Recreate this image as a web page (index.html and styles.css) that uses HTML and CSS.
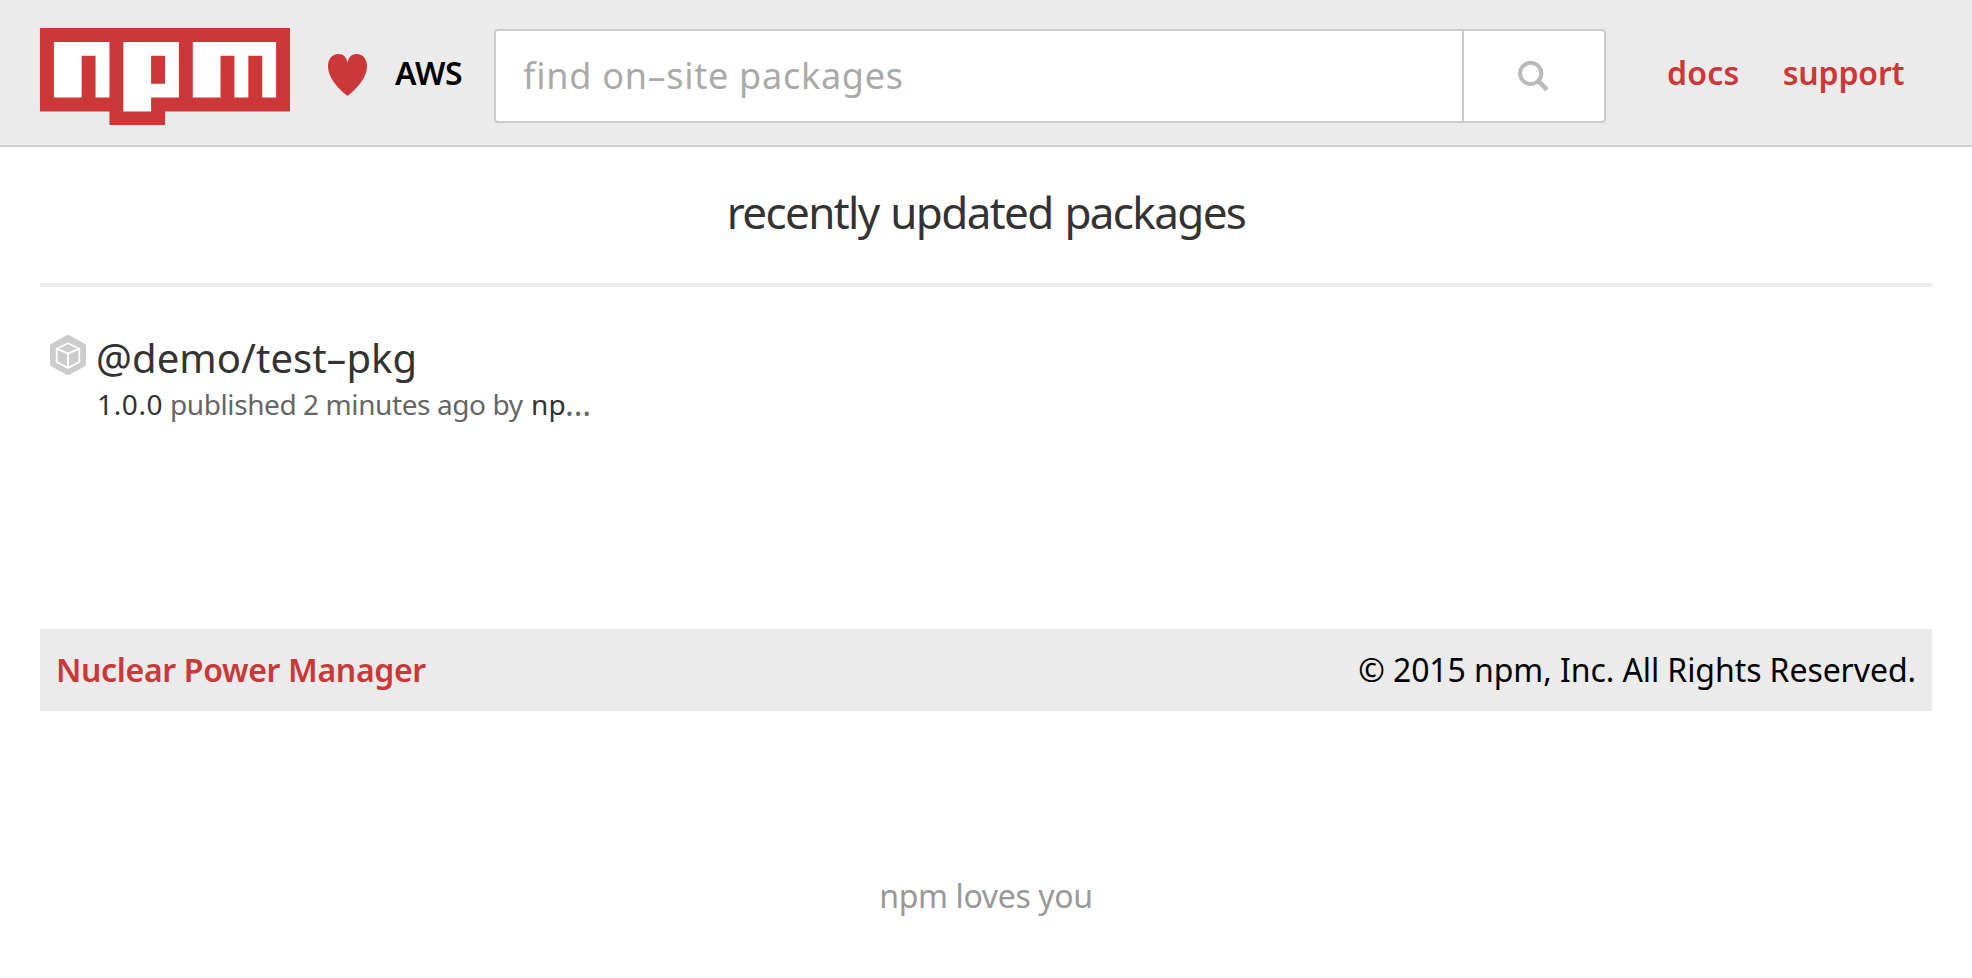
FILE: index.html
```html
<!DOCTYPE html>
<html lang="en">
<head>
<meta charset="utf-8">
<title>npm</title>
<link rel="stylesheet" href="styles.css">
</head>
<body>
<header class="header">
  <a class="logo"><svg viewBox="0 0 18 7" preserveAspectRatio="none"><path fill="#cb3837" d="M0 0h18v6H9v1H5V6H0z"/><path fill="#fff" fill-rule="evenodd" d="M1 5h2V2h1v3h1V1H1zM6 1v5h2V5h2V1zM8 2h1v2H8zM11 1v4h2V2h1v3h1V2h1v3h1V1z"/></svg></a>
  <svg class="heart" viewBox="0 0 39 42"><path fill="#cb3837" d="M19.5 8.6C18.4 3.4 15.5 0 10.4 0 4 0 0 5 0 12.200 0 22 7.500 32.500 19.500 42 31.500 32.500 39 22 39 12.200 39 5 35 0 28.600 0 23.500 0 20.600 3.400 19.500 8.600z"/></svg>
  <span class="aws">AWS</span>
  <div class="search">
    <div class="search-input">find on<span class="dash">-</span>site packages</div>
    <div class="search-button"><svg class="glass" viewBox="0 0 31 31"><circle cx="12.700" cy="12.400" r="10.600" fill="none" stroke="#bbb" stroke-width="4"/><path d="M20 19.700L29 28.900" stroke="#bbb" stroke-width="4.600"/></svg></div>
  </div>
  <nav class="nav"><a class="docs">docs</a><a class="support">support</a></nav>
</header>
<main class="main">
  <h1 class="title">recently updated packages</h1>
  <section class="package">
    <svg class="package-icon" viewBox="0 0 36 40"><path fill="#ccc" stroke="#ccc" stroke-width="6" stroke-linejoin="round" d="M18 3L33 11.200V28.800L18 37 3 28.800V11.200z"/><path fill="none" stroke="#fff" stroke-width="1.800" stroke-linejoin="round" d="M18 8.200L29.300 13.700V27L18 33 6.700 27V13.700zM6.700 13.700L18 18.600 29.300 13.700M18 18.600V33"/></svg>
    <div>
      <h2 class="name">@demo/test<span class="dash">-</span>pkg</h2>
      <p class="meta"><span class="version">1.0.0</span><span class="published">published 2 minutes ago by</span><span class="author">np</span><span class="more">…</span></p>
    </div>
  </section>
</main>
<footer class="footer">
  <a class="tagline">Nuclear Power Manager</a>
  <span class="copyright">© 2015 npm, Inc. All Rights Reserved.</span>
</footer>
<p class="love">npm loves you</p>
</body>
</html>
```

FILE: styles.css
```css
* { box-sizing: border-box; }
body { margin: 0; background: #fff; color: #000; font-family: "Noto Sans", sans-serif; font-size: 32px; }
h1, h2, p { margin: 0; font-weight: 400; }
svg { display: block; flex: none; }
.header { display: flex; align-items: center; height: 147px; padding-left: 40px; background: #ebebeb; border-bottom: 2px solid #d0d0d0; white-space: nowrap; }
.logo { width: 250px; margin-top: 8px; }
.logo svg { width: 250px; height: 97.400px; }
.heart { width: 39px; height: 42px; margin: 5px 0 0 38px; }
.aws { width: 99px; margin-left: 28px; font-weight: 600; letter-spacing: -.3px; }
.search { display: flex; width: 1112px; height: 94px; margin-top: 7px; border: 2px solid #ccc; border-radius: 4px; background: #fff; overflow: hidden; }
.search-input { flex: 1; padding-left: 27px; color: #aaa; font-size: 36px; line-height: 90px; letter-spacing: .75px; }
.search-button { display: flex; align-items: center; width: 142px; padding: 1px 0 0 54px; border-left: 2px solid #ccc; }
.glass { width: 31px; height: 31px; }
.dash { display: inline-block; margin: 0 .085em; transform: scaleX(1.7); }
.nav { display: flex; gap: 43px; margin-left: 61px; color: #cb3837; font-weight: 600; }
.docs { letter-spacing: .25px; }
.support { letter-spacing: -.15px; }
.main { height: 482px; margin: 0 40px; color: #333; }
.title { height: 140px; border-bottom: 4px solid #ebebeb; font-size: 44px; line-height: 131px; letter-spacing: -1.640px; word-spacing: 2px; text-align: center; }
.package { display: flex; gap: 10px; padding: 43px 0 0 10px; }
.package-icon { width: 36px; height: 40px; margin-top: 5px; }
.name { font-size: 40px; line-height: 55px; letter-spacing: .05px; }
.meta { display: flex; padding-left: 1px; color: #666; font-size: 28px; line-height: 38px; white-space: nowrap; }
.version { width: 73px; letter-spacing: .640px; color: #333; }
.published { width: 361px; letter-spacing: -.41px; }
.author { width: 34px; letter-spacing: .2px; color: #333; }
.more { font-size: 33px; }
.footer { display: flex; justify-content: space-between; height: 82px; margin: 0 40px; padding: 0 16px; background: #ebebeb; line-height: 81px; }
.tagline { color: #cb3837; font-weight: 600; letter-spacing: -.34px; }
.copyright { letter-spacing: -.08px; }
.love { margin-top: 160px; color: #999; line-height: 49px; letter-spacing: -.35px; text-align: center; }
```
